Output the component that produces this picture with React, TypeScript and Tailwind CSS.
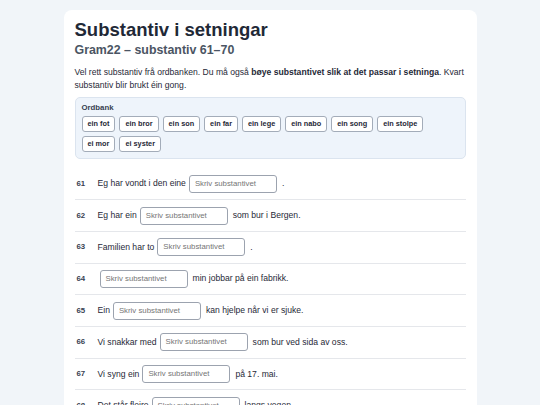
import React from 'react';

const words = ['ein fot', 'ein bror', 'ein son', 'ein far', 'ein lege', 'ein nabo', 'ein song', 'ein stolpe', 'ei mor', 'ei syster'];

const rows: { n: number; before: string; after: string }[] = [
  { n: 61, before: 'Eg har vondt i den eine', after: '.' },
  { n: 62, before: 'Eg har ein', after: 'som bur i Bergen.' },
  { n: 63, before: 'Familien har to', after: '.' },
  { n: 64, before: '', after: 'min jobbar på ein fabrikk.' },
  { n: 65, before: 'Ein', after: 'kan hjelpe når vi er sjuke.' },
  { n: 66, before: 'Vi snakkar med', after: 'som bur ved sida av oss.' },
  { n: 67, before: 'Vi syng ein', after: 'på 17. mai.' },
  { n: 68, before: 'Det står fleire', after: 'langs vegen.' },
];

export default function App() {
  return (
    <div className="min-h-screen bg-[#f1f5f9] pt-[10px] font-['Liberation_Sans',Arial,sans-serif] text-[#1f2937]">
      <div className="mx-auto w-[413px] rounded-[8px] bg-white px-[11px] pt-[8px] pb-4">
        <h1 className="text-[18.5px] font-bold leading-[24px] text-[#1f2937]">Substantiv i setningar</h1>
        <h2 className="text-[12.4px] font-bold leading-[16px] text-[#4b5563]">Gram22 – substantiv 61–70</h2>
        <p className="mt-[7.5px] text-[8.6px] leading-[13px] text-[#1f2937]">
          Vel rett substantiv frå ordbanken. Du må også <b>bøye substantivet slik at det passar i setninga</b>. Kvart substantiv blir brukt éin gong.
        </p>
        <div className="mt-[5.5px] rounded-[5px] border border-[#dbe4ef] bg-[#eef4fb] px-[6px] pt-[3.5px] pb-[6px]">
          <div className="text-[7.8px] font-bold leading-[11px] text-[#374151]">Ordbank</div>
          <div className="mt-[3.5px] flex flex-wrap gap-x-[4px] gap-y-[4px]">
            {words.map(w => (
              <span key={w} className="flex h-[16px] items-center rounded-[3px] border border-[#a3acb9] bg-white px-[5px] text-[7.3px] font-bold text-[#1f2937]">
                {w}
              </span>
            ))}
          </div>
        </div>
        <div className="mt-[9.5px]">
          {rows.map(r => (
            <div key={r.n} className="flex items-center border-b border-[#e5e7eb] py-[6.35px] text-[8.6px]">
              <span className="w-[23px] pl-[2px] text-[7.8px] font-bold text-[#374151]">{r.n}</span>
              {r.before && <span className="mr-[3px]">{r.before}</span>}
              <span className={`flex h-[18px] w-[88px] items-center rounded-[3px] border border-[#9ca3af] bg-white px-[5px] text-[7.8px] text-[#757575] ${r.before ? '' : 'ml-[2px]'}`}>
                Skriv substantivet
              </span>
              <span className="ml-[5px]">{r.after}</span>
            </div>
          ))}
        </div>
      </div>
    </div>
  );
}
